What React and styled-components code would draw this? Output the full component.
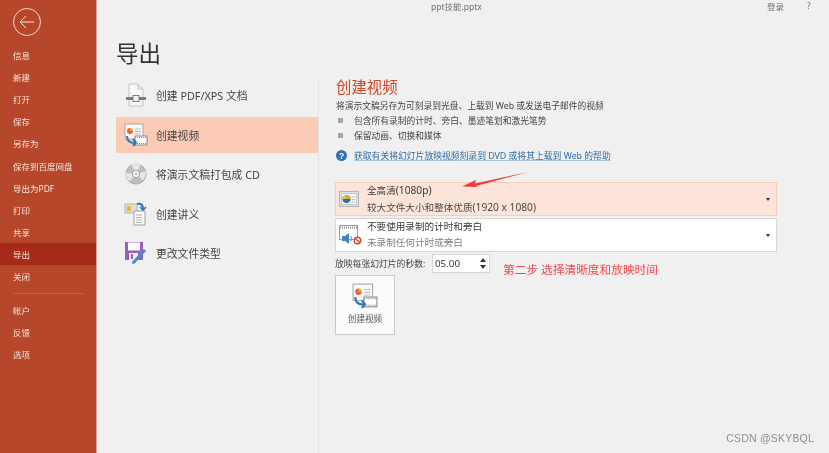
import React from 'react';
import styled, { createGlobalStyle } from 'styled-components';

const GlobalStyle = createGlobalStyle`
  html, body { margin: 0; padding: 0; background: #f0f0f0; }
  body { font-family: "Noto Sans", "Noto Sans CJK SC", sans-serif; }
`;

const Page = styled.div`
  position: relative;
  display: flex;
  width: 829px;
  height: 453px;
  overflow: hidden;
  background: #f0f0f0;
  filter: blur(0.4px);
`;

const Sidebar = styled.aside`
  width: 96px;
  flex: none;
  padding-top: 8px;
  background: #b7472a;
  border-right: 1px solid #d9a392;
  color: #f6e3dc;
`;

const BackButton = styled.div`
  display: flex;
  align-items: center;
  justify-content: center;
  width: 26px;
  height: 26px;
  margin: 0 0 8px 13px;
  border: 1px solid #f3d9d0;
  border-radius: 50%;
`;

const NavItem = styled.div`
  display: flex;
  align-items: center;
  height: 22.1px;
  padding-left: 13px;
  font-size: 8.5px;
  white-space: nowrap;
  background: ${p => (p.$active ? '#a52a17' : 'transparent')};
`;

const NavDivider = styled.div`
  height: 1px;
  margin: 6px 12px 5px 13px;
  background: #cf5a3c;
`;

const Main = styled.main`
  flex: 1;
  min-width: 0;
  display: flex;
  flex-direction: column;
`;

const TopBar = styled.header`
  display: flex;
  align-items: center;
  height: 11px;
  color: #6f6f6f;
  font-size: 8.5px;
`;

const FileName = styled.div`
  margin-left: 334px;
  width: 336px;
`;

const TopLink = styled.div`
  width: ${p => p.$width}px;
`;

const PageTitle = styled.h1`
  margin: 29px 0 0 19px;
  height: 36px;
  font-size: 22.5px;
  line-height: 28px;
  font-weight: 400;
  color: #333;
`;

const Body = styled.div`
  flex: 1;
  display: flex;
  min-height: 0;
`;

const ExportList = styled.nav`
  width: 202px;
  flex: none;
  margin-left: 19px;
  padding-top: 1px;
  display: flex;
  flex-direction: column;
  gap: 3.5px;
`;

const ExportItem = styled.div`
  display: flex;
  align-items: center;
  height: 36px;
  padding-left: 5px;
  gap: 5px;
  font-size: 10.8px;
  color: #444;
  white-space: nowrap;
  background: ${p => (p.$active ? '#fccbb5' : 'transparent')};
`;

const IconSlot = styled.span`
  display: flex;
  align-items: center;
  justify-content: center;
  width: 30px;
  height: 30px;
  flex: none;
`;

const Details = styled.section`
  flex: 1;
  margin-top: 2px;
  padding-left: 17px;
  border-left: 1px solid #e2e2e2;
  color: #444;
`;

const DetailsTitle = styled.h2`
  margin: 0;
  font-size: 15.4px;
  line-height: 20px;
  font-weight: 400;
  color: #d24726;
`;

const DetailsText = styled.p`
  margin: 1px 0 0;
  height: 14px;
  font-size: 8.75px;
  line-height: 14px;
  white-space: nowrap;
`;

const BulletRow = styled.div`
  display: flex;
  align-items: center;
  height: 15px;
  font-size: 8.75px;
  white-space: nowrap;
`;

const Bullet = styled.span`
  width: 5px;
  height: 5px;
  margin: 0 11px 0 2px;
  background: #a6a6a6;
`;

const HelpRow = styled.div`
  display: flex;
  align-items: center;
  gap: 7px;
  height: 14px;
  margin-top: 5px;
`;

const HelpLink = styled.a`
  font-size: 8.8px;
  color: #2e6ca8;
  text-decoration: underline;
  text-decoration-color: #a9c3dc;
  white-space: nowrap;
`;

const Picker = styled.div`
  display: flex;
  align-items: center;
  box-sizing: border-box;
  width: 442px;
  height: 34px;
  margin-left: -1px;
  margin-top: ${p => p.$top}px;
  padding-right: 6px;
  background: ${p => (p.$active ? '#fde4da' : '#fff')};
  border: 1px solid ${p => (p.$active ? '#f9cdb8' : '#d6d6d6')};
`;

const PickerIcon = styled.span`
  display: flex;
  width: 28px;
  padding-left: 3px;
  flex: none;
`;

const PickerText = styled.div`
  flex: 1;
  font-size: 9.6px;
  line-height: 16px;
  color: #3a3a3a;
  white-space: nowrap;
`;

const PickerHint = styled.div`
  color: ${p => (p.$muted ? '#7f7f7f' : '#4a4a4a')};
`;

const Latin = styled.span`
  font-size: 10.2px;
`;

const Caret = styled.span`
  width: 0;
  height: 0;
  border-left: 2.5px solid transparent;
  border-right: 2.5px solid transparent;
  border-top: 3px solid #333;
`;

const SlideRow = styled.div`
  display: flex;
  align-items: flex-start;
  margin: 2px 0 0 -1px;
  height: 21px;
`;

const SlideLabel = styled.label`
  width: 97px;
  font-size: 8.8px;
  line-height: 20px;
  white-space: nowrap;
`;

const SpinBox = styled.div`
  display: flex;
  align-items: center;
  justify-content: space-between;
  box-sizing: border-box;
  width: 58px;
  height: 19px;
  padding: 0 3px 0 2px;
  background: #fff;
  border: 1px solid #d6d6d6;
  font-size: 9.8px;
  color: #333;
`;

const SpinArrows = styled.span`
  display: flex;
  flex-direction: column;
  gap: 3px;
`;

const SpinArrow = styled.span`
  width: 0;
  height: 0;
  border-left: 3px solid transparent;
  border-right: 3px solid transparent;
  border-${p => (p.$up ? 'bottom' : 'top')}: 4px solid #333;
`;

const StepNote = styled.div`
  margin: 7px 0 0 13px;
  font-size: 11.7px;
  line-height: 16px;
  color: #f5484d;
  white-space: nowrap;
`;

const CreateButton = styled.button`
  display: flex;
  flex-direction: column;
  align-items: center;
  box-sizing: border-box;
  width: 60px;
  height: 60px;
  margin: 0 0 0 -1px;
  padding: 7px 0 0;
  background: #fbfbfb;
  border: 1px solid #c9c9c9;
  font-family: inherit;
  font-size: 8.6px;
  color: #555;
  gap: 3px;
`;

const ArrowMark = styled.svg`
  position: absolute;
  left: 455px;
  top: 168px;
`;

const Watermark = styled.div`
  position: absolute;
  right: 15px;
  bottom: 9px;
  font-size: 10.5px;
  font-family: "Liberation Sans", "Noto Sans CJK SC", sans-serif;
  letter-spacing: 0.2px;
  color: #8f8f8f;
`;

const PdfIcon = () => (
  <svg width="22" height="24" viewBox="0 0 22 24">
    <path d="M4 1h9l5 5v17H4z" fill="#f8f8f8" stroke="#c4c4c4" />
    <path d="M13 1v5h5" fill="#e6e6e6" stroke="#c4c4c4" />
    <rect x="1" y="14" width="20" height="3" fill="#7d7d7d" />
    <rect x="8" y="12.5" width="6" height="6" fill="#f4f4f4" stroke="#7d7d7d" />
  </svg>
);

const VideoIcon = ({ size = 24 }) => (
  <svg width={size} height={size} viewBox="0 0 24 24">
    <rect x="1" y="1" width="18" height="15" fill="#fafafa" stroke="#a8a8a8" />
    <circle cx="6" cy="8" r="3" fill="#e8622f" />
    <path d="M6 8V5a3 3 0 0 1 3 3z" fill="#f5b63c" />
    <path d="M11 6h6M11 8.5h6M11 11h6" stroke="#b8b8b8" />
    <rect x="11" y="13" width="12" height="9" fill="#fff" stroke="#8a8a8a" />
    <path d="M11 14.5h12M11 20.5h12" stroke="#8a8a8a" strokeDasharray="1 1" />
    <path d="M3 13c0 5 3 7 8 7" fill="none" stroke="#2f78bd" strokeWidth="2" />
    <path d="M9 16l3 3.5-3 3.5" fill="none" stroke="#2f78bd" strokeWidth="2" />
  </svg>
);

const DiscIcon = () => (
  <svg width="22" height="22" viewBox="0 0 24 24">
    <circle cx="12" cy="12" r="11" fill="#bfbfbf" stroke="#a9a9a9" />
    <path d="M12 12L7 2a11 11 0 0 1 10 0zM12 12L22.5 9a11 11 0 0 1-3 10zM12 12L5 20a11 11 0 0 1-4-9z" fill="#e6e6e6" />
    <circle cx="12" cy="12" r="4" fill="#f4f4f4" stroke="#9a9a9a" />
    <circle cx="12" cy="12" r="1.4" fill="#bdbdbd" />
  </svg>
);

const HandoutIcon = () => (
  <svg width="24" height="24" viewBox="0 0 24 24">
    <rect x="1" y="2" width="12" height="9" fill="#d8dde2" stroke="#b5b5b5" />
    <path d="M3 4h4v5H3z" fill="#f2b23c" />
    <path d="M9 9h11v14H9z" transform="translate(1 0)" fill="#fafafa" stroke="#9f9f9f" />
    <path d="M12 13h6M12 15.500h6M12 18h6M12 20.500h6" stroke="#b5b5b5" />
    <path d="M13 2c4-1 6 1 6 5" fill="none" stroke="#2f78bd" strokeWidth="2" />
    <path d="M16 5l3 3 3-3" fill="none" stroke="#2f78bd" strokeWidth="1.600" />
  </svg>
);

const SaveAsIcon = () => (
  <svg width="24" height="24" viewBox="0 0 24 24">
    <path d="M1 1h18v18H1z" fill="#9a5fbe" />
    <rect x="4" y="1.500" width="12" height="8" fill="#fbfbfb" />
    <rect x="5" y="12" width="9" height="7" fill="#f0f0f0" />
    <rect x="7" y="13" width="2" height="5" fill="#9a5fbe" />
    <path d="M9 22L21 9" stroke="#4a8cc7" strokeWidth="3" />
    <path d="M8 23l1-3 2 2z" fill="#4a8cc7" />
  </svg>
);

const HdIcon = () => (
  <svg width="20" height="16" viewBox="0 0 20 16">
    <rect x="0.500" y="0.500" width="19" height="15" fill="#dfe3e8" stroke="#b5b5b5" />
    <rect x="2.500" y="2.500" width="15" height="11" fill="#fafafa" stroke="#c5c5c5" />
    <circle cx="7.500" cy="8" r="4" fill="#2f6db0" />
    <path d="M7.500 8V4a4 4 0 0 1 4 4z" fill="#f3a52b" />
    <path d="M3.500 8a4 4 0 0 1 4-4v4z" fill="#f0c23e" />
    <path d="M12.500 6h3.500M12.500 8.500h3.500M12.500 11h3.500" stroke="#b8b8b8" />
  </svg>
);

const NarrationIcon = () => (
  <svg width="23" height="21" viewBox="0 0 23 21">
    <rect x="0.500" y="0.500" width="18" height="14" fill="#fff" stroke="#9d9d9d" />
    <path d="M1 2.500h17" stroke="#8f8f8f" strokeDasharray="1 1" strokeWidth="2" />
    <path d="M3 11h3l4-3v11l-4-3H3z" fill="#3f86c6" />
    <path d="M11.500 11a3 3 0 0 1 0 5" fill="none" stroke="#3f86c6" />
    <circle cx="18.500" cy="15.500" r="3.200" fill="#fff" stroke="#d3452f" strokeWidth="1.400" />
    <path d="M16.500 13.500l4 4" stroke="#d3452f" strokeWidth="1.400" />
  </svg>
);

const HelpIcon = () => (
  <svg width="11" height="11" viewBox="0 0 11 11">
    <circle cx="5.500" cy="5.500" r="5.500" fill="#2e74b5" />
    <text x="5.500" y="8.600" textAnchor="middle" fontSize="8.500" fontWeight="700" fill="#fff" fontFamily="Liberation Sans, sans-serif">?</text>
  </svg>
);

const navTop = ['信息', '新建', '打开', '保存', '另存为', '保存到百度网盘', '导出为PDF', '打印', '共享', '导出', '关闭'];
const navBottom = ['帐户', '反馈', '选项'];

const exportItems = [
  { label: '创建 PDF/XPS 文档', icon: <PdfIcon /> },
  { label: '创建视频', icon: <VideoIcon />, active: true },
  { label: '将演示文稿打包成 CD', icon: <DiscIcon /> },
  { label: '创建讲义', icon: <HandoutIcon /> },
  { label: '更改文件类型', icon: <SaveAsIcon /> },
];

export default function App() {
  return (
    <Page>
      <GlobalStyle />
      <Sidebar>
        <BackButton>
          <svg width="16" height="14" viewBox="0 0 16 14" fill="none" stroke="#f8e6df" strokeWidth="1">
            <path d="M15 7H1M7 1L1 7l6 6" />
          </svg>
        </BackButton>
        {navTop.map(item => (
          <NavItem key={item} $active={item === '导出'}>{item}</NavItem>
        ))}
        <NavDivider />
        {navBottom.map(item => (
          <NavItem key={item}>{item}</NavItem>
        ))}
      </Sidebar>

      <Main>
        <TopBar>
          <FileName>ppt技能.pptx</FileName>
          <TopLink $width={40}>登录</TopLink>
          <TopLink $width={10}>?</TopLink>
        </TopBar>
        <PageTitle>导出</PageTitle>
        <Body>
          <ExportList>
            {exportItems.map(item => (
              <ExportItem key={item.label} $active={item.active}>
                <IconSlot>{item.icon}</IconSlot>
                {item.label}
              </ExportItem>
            ))}
          </ExportList>
          <Details>
            <DetailsTitle>创建视频</DetailsTitle>
            <DetailsText>将演示文稿另存为可刻录到光盘、上载到 Web 或发送电子邮件的视频</DetailsText>
            <BulletRow><Bullet />包含所有录制的计时、旁白、墨迹笔划和激光笔势</BulletRow>
            <BulletRow><Bullet />保留动画、切换和媒体</BulletRow>
            <HelpRow>
              <HelpIcon />
              <HelpLink>获取有关将幻灯片放映视频刻录到 DVD 或将其上载到 Web 的帮助</HelpLink>
            </HelpRow>
            <Picker $active $top={20}>
              <PickerIcon><HdIcon /></PickerIcon>
              <PickerText>
                全高清<Latin>(1080p)</Latin>
                <PickerHint>较大文件大小和整体优质<Latin>(1920 x 1080)</Latin></PickerHint>
              </PickerText>
              <Caret />
            </Picker>
            <Picker $top={2}>
              <PickerIcon><NarrationIcon /></PickerIcon>
              <PickerText>
                不要使用录制的计时和旁白
                <PickerHint $muted>未录制任何计时或旁白</PickerHint>
              </PickerText>
              <Caret />
            </Picker>
            <SlideRow>
              <SlideLabel>放映每张幻灯片的秒数:</SlideLabel>
              <SpinBox>
                05.00
                <SpinArrows>
                  <SpinArrow $up />
                  <SpinArrow />
                </SpinArrows>
              </SpinBox>
              <StepNote>第二步 选择清晰度和放映时间</StepNote>
            </SlideRow>
            <CreateButton>
              <VideoIcon size={26} />
              创建视频
            </CreateButton>
          </Details>
        </Body>
      </Main>

      <ArrowMark width="76" height="24" viewBox="0 0 76 24">
        <path d="M73 4L20 15.500 21 18z" fill="#ee3b3b" />
        <path d="M7 18.500L21 12l-1 3.500 2 3.500z" fill="#ee3b3b" />
      </ArrowMark>
      <Watermark>CSDN @SKYBQL</Watermark>
    </Page>
  );
}
